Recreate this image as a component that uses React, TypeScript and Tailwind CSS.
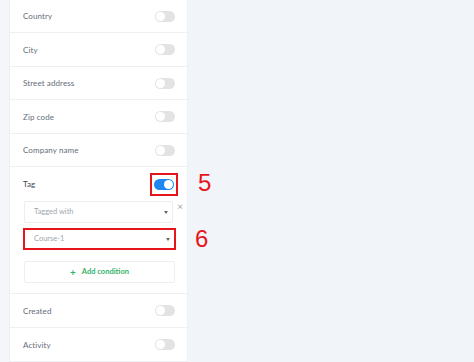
import React from "react";

function Toggle({ on = false }: { on?: boolean }) {
  return on ? (
    <div className="w-[20px] h-[11px] rounded-full bg-[#1e88f0] flex items-center justify-end pr-[1px]">
      <div className="w-[9px] h-[9px] rounded-full bg-white" />
    </div>
  ) : (
    <div className="w-[20px] h-[11px] rounded-full bg-[#e3e3e3] flex items-center pl-[1px]">
      <div className="w-[9px] h-[9px] rounded-full bg-white" />
    </div>
  );
}

function Row({ label, h }: { label: string; h: string }) {
  return (
    <div className={`${h} flex items-center justify-between pl-[13px] pr-[12px] border-b border-[#eef0f3]`}>
      <span className="text-[8px] tracking-[0.1px] text-[#656d78]">{label}</span>
      <Toggle />
    </div>
  );
}

function Caret() {
  return <div className="w-0 h-0 border-l-[2.5px] border-r-[2.5px] border-t-[3px] border-l-transparent border-r-transparent border-t-[#666]" />;
}

export default function App() {
  return (
    <div
      className="w-[474px] h-[362px] bg-[#f1f4f9] flex overflow-hidden"
      style={{ fontFamily: "Lato, 'Open Sans', sans-serif" }}
    >
      <div className="w-[9px] shrink-0 bg-[#f4f6f9]" />
      <div className="w-[179px] shrink-0 bg-white border-x border-[#eceff3] flex flex-col">
        <Row label="Country" h="h-[33px]" />
        <Row label="City" h="h-[34px]" />
        <Row label="Street address" h="h-[33px]" />
        <Row label="Zip code" h="h-[34px]" />
        <Row label="Company name" h="h-[33px]" />
        <div className="border-b border-[#eef0f3] pb-[10px]">
          <div className="h-[34px] flex items-center justify-between pl-[13px] pr-[9px]">
            <span className="text-[8px] tracking-[0.1px] text-[#3f4650]">Tag</span>
            <div className="border-2 border-[#e8141c] px-[2px] py-[4px]">
              <Toggle on />
            </div>
          </div>
          <div className="flex items-center pl-[14px] pr-[4px] gap-[4px]">
            <div className="w-[151px] h-[22px] border border-[#eceef1] rounded-[2px] flex items-center justify-between pl-[9px] pr-[4px]">
              <span className="text-[7.5px] text-[#a0a6ae]">Tagged with</span>
              <Caret />
            </div>
            <span className="text-[10px] text-[#9aa6b2] leading-none -mt-[12px]">×</span>
          </div>
          <div className="pl-[13px] mt-[5px]">
            <div className="w-[153px] h-[22px] border-2 border-[#e8141c] flex items-center justify-between pl-[9px] pr-[4px]">
              <span className="text-[7.5px] text-[#a0a6ae]">Course-1</span>
              <Caret />
            </div>
          </div>
          <div className="pl-[14px] mt-[11px]">
            <div className="w-[151px] h-[22px] border border-[#eceef1] rounded-[2px] flex items-center justify-center gap-[6px]">
              <span className="text-[10px] font-bold text-[#34b36b] leading-none">+</span>
              <span className="text-[7.5px] font-bold text-[#34b36b]">Add condition</span>
            </div>
          </div>
        </div>
        <Row label="Created" h="h-[34px]" />
        <Row label="Activity" h="h-[34px]" />
      </div>
      <div className="relative flex-1">
        <span
          className="absolute left-[10px] top-[171px] text-[24px] text-[#e8141c] leading-none"
          style={{ fontFamily: "'Liberation Sans', sans-serif" }}
        >
          5
        </span>
        <span
          className="absolute left-[7px] top-[227px] text-[24px] text-[#e8141c] leading-none"
          style={{ fontFamily: "'Liberation Sans', sans-serif" }}
        >
          6
        </span>
      </div>
    </div>
  );
}
